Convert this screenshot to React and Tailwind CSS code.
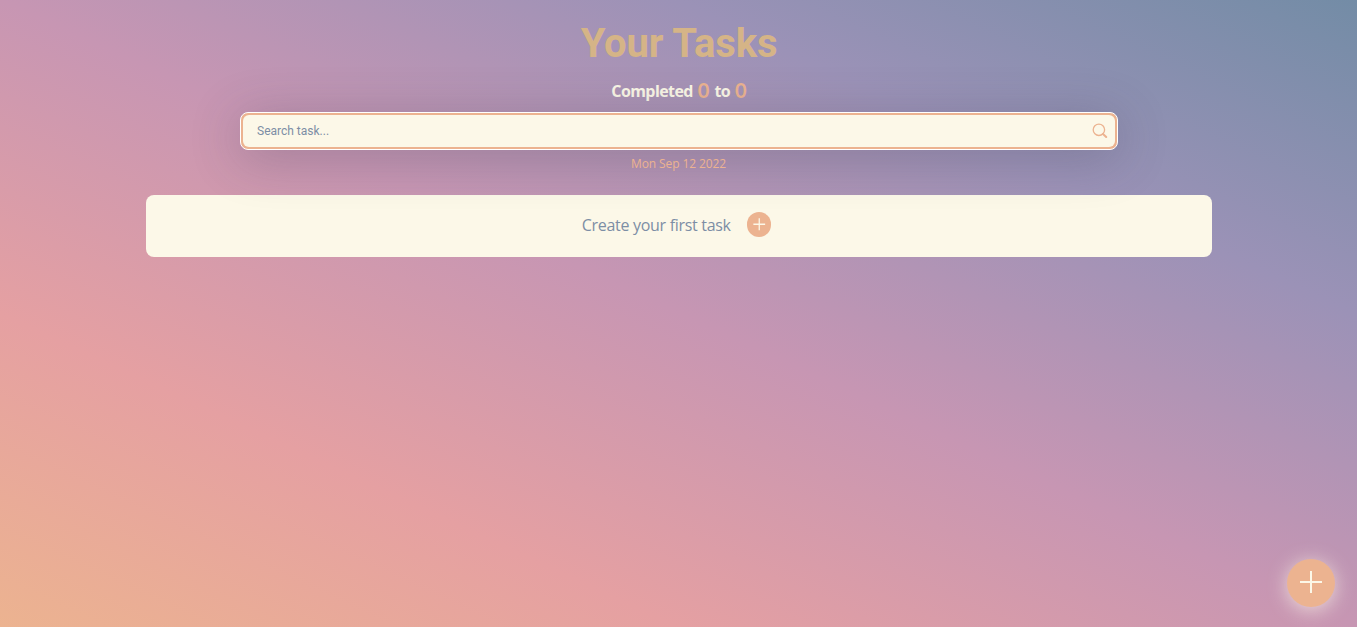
export default function App() {
  return (
    <main className="relative flex h-[627px] w-full flex-col items-center overflow-hidden bg-[linear-gradient(to_top_right,#ecb390,#e5a0a2,#c796b3,#9b92b7,#738ca6)] font-['Open_Sans',sans-serif]">
      <h1 className="mt-[20px] pl-px font-[Roboto,sans-serif] text-[40px] leading-[48px] font-bold tracking-[-0.1px] text-[#d5b487]">
        Your Tasks
      </h1>
      <p className="mt-[7px] flex h-[30px] items-center gap-[5px] pl-px text-[16px] font-bold text-[#faf7e6]">
        <span className="pt-[2px] tracking-[-0.6px]">Completed</span>
        <span className="font-[Lato,sans-serif] text-[20px] text-[#ecb390]">0</span>
        <span className="pt-[2px] tracking-[-0.6px]">to</span>
        <span className="font-[Lato,sans-serif] text-[20px] text-[#ecb390]">0</span>
      </p>
      <label className="relative z-10 mt-[7px] flex h-[38px] w-[878px] items-center justify-between rounded-[8px] border border-white bg-[#ecb390] p-[2px] shadow-[0_7px_50px_rgba(60,60,80,0.3)]">
        <div className="flex h-full w-full items-center rounded-[6px] bg-[#fcf8e8] pr-[7px] pl-[14.5px]">
          <input
            className="min-w-0 flex-1 bg-transparent font-[Roboto,sans-serif] text-[12px] text-[#7c8ea5] outline-none placeholder:text-[#7c8ea5]"
            placeholder="Search task..."
          />
          <svg width="17" height="16" viewBox="0 0 17 16" fill="none" stroke="#ecb390" strokeLinecap="round">
            <circle cx="7.9" cy="6.8" r="5.7" strokeWidth="1.3" />
            <path d="M12 11 15.2 14" strokeWidth="2.1" />
          </svg>
        </div>
      </label>
      <time className="relative z-20 mt-[5px] text-[12px] leading-[18px] font-medium tracking-[-0.1px] text-[#ecb390]">
        Mon Sep 12 2022
      </time>
      <section className="mt-[22px] flex h-[62px] w-[1066px] items-center justify-center gap-[16px] rounded-[8px] bg-[#fcf8e8] pr-[4px]">
        <span className="pb-[2px] text-[16px] tracking-[-0.3px] text-[#7c8ea5]">Create your first task</span>
        <button aria-label="Create task" className="mb-[3px] size-[24.5px] rounded-full bg-[#ecb390]">
          <svg viewBox="0 0 25 25" fill="none" stroke="#fcf8e8" strokeWidth="1.3">
            <path d="M6.5 12.5h12M12.5 6.5v12" />
          </svg>
        </button>
      </section>
      <button aria-label="Add task" className="absolute right-[22px] bottom-[20px] size-[48px] rounded-full bg-[#ecb390] shadow-[0_3px_20px_rgba(252,248,232,0.7)]">
        <svg viewBox="0 0 48 48" fill="none" stroke="#fcf8e8" strokeWidth="2">
          <path d="M13 23h22M24 12v22" />
        </svg>
      </button>
    </main>
  );
}
